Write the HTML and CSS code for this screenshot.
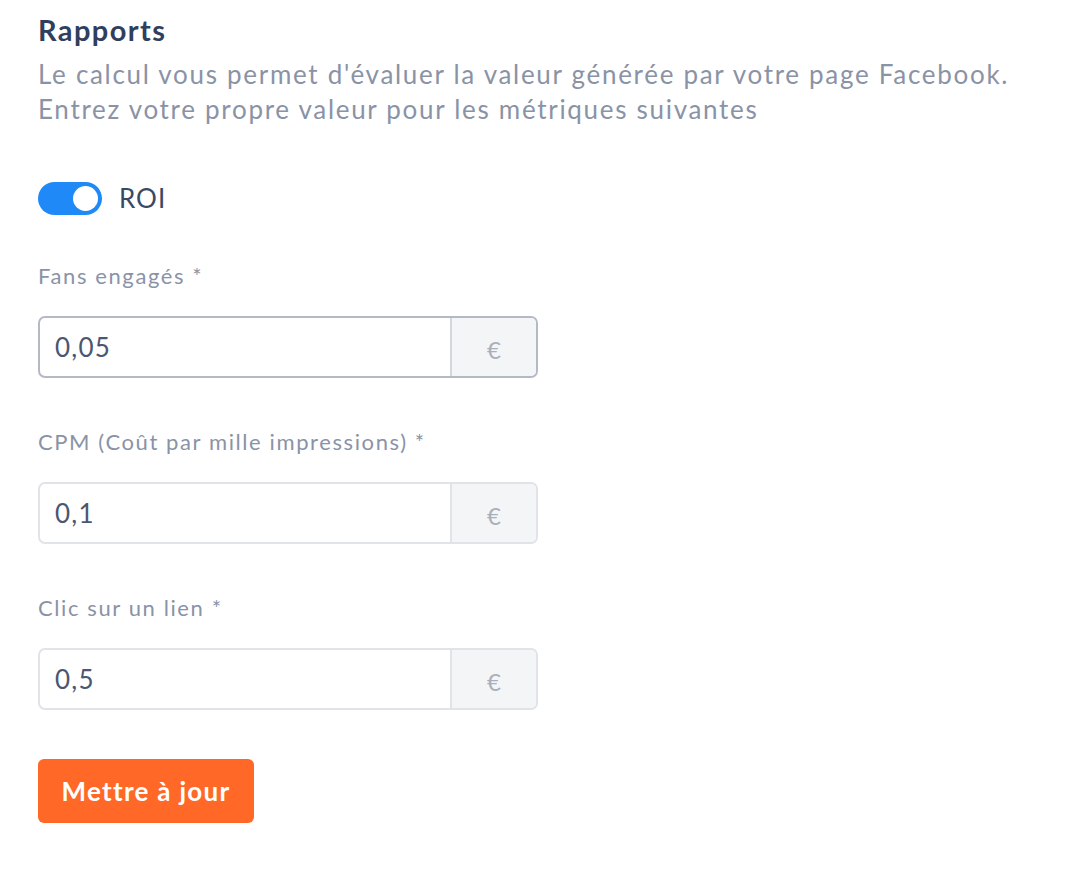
FILE: index.html
```html
<!DOCTYPE html>
<html lang="fr">
<head>
<meta charset="utf-8">
<title>Rapports</title>
<link rel="stylesheet" href="styles.css">
</head>
<body>
<main class="page">
  <h1 class="title">Rapports</h1>
  <p class="desc">Le calcul vous permet d'évaluer la valeur générée par votre page Facebook.<br>Entrez votre propre valeur pour les métriques suivantes</p>

  <div class="toggle-row">
    <span class="toggle"><span class="knob"></span></span>
    <span class="toggle-label">ROI</span>
  </div>

  <div class="field">
    <label class="label">Fans engagés *</label>
    <div class="input-group focused">
      <span class="input-value">0,05</span>
      <span class="addon">€</span>
    </div>
  </div>

  <div class="field">
    <label class="label">CPM (Coût par mille impressions) *</label>
    <div class="input-group">
      <span class="input-value">0,1</span>
      <span class="addon">€</span>
    </div>
  </div>

  <div class="field">
    <label class="label">Clic sur un lien *</label>
    <div class="input-group">
      <span class="input-value">0,5</span>
      <span class="addon">€</span>
    </div>
  </div>

  <button class="btn">Mettre à jour</button>
</main>
</body>
</html>
```

FILE: styles.css
```css
html, body {
  margin: 0;
  padding: 0;
  background: #ffffff;
}
body {
  font-family: "Lato", "Noto Sans", sans-serif;
  color: #33415c;
}
.page {
  padding: 12px 0 0 38px;
  display: flex;
  flex-direction: column;
  align-items: flex-start;
}
.title {
  margin: 0;
  font-size: 29px;
  line-height: 36px;
  font-weight: 700;
  color: #2f3f5d;
  letter-spacing: 1.4px;
}
.desc {
  margin: 9px 0 0 0;
  font-size: 26px;
  line-height: 35px;
  color: #8a93a6;
  letter-spacing: 1.7px;
}
.toggle-row {
  margin-top: 55px;
  display: flex;
  align-items: center;
  gap: 17px;
}
.toggle {
  width: 64px;
  height: 33px;
  border-radius: 17px;
  background: #1f8af7;
  display: flex;
  align-items: center;
  justify-content: flex-end;
  padding: 0 4px;
  box-sizing: border-box;
  flex-shrink: 0;
}
.knob {
  width: 25px;
  height: 25px;
  border-radius: 50%;
  background: #ffffff;
}
.toggle-label {
  font-size: 26px;
  line-height: 33px;
  color: #3a4866;
  letter-spacing: 1px;
}
.field {
  display: flex;
  flex-direction: column;
  margin-top: 49px;
}
.field + .field {
  margin-top: 52px;
}
.label {
  font-size: 22px;
  line-height: 24px;
  color: #8a93a6;
  letter-spacing: 1.6px;
}
.input-group {
  margin-top: 28px;
  width: 500px;
  height: 62px;
  flex-shrink: 0;
  box-sizing: border-box;
  border: 2px solid #e0e3e8;
  border-radius: 7px;
  display: flex;
  align-items: stretch;
  overflow: hidden;
}
.input-group.focused {
  border-color: #b4b9c4;
}
.input-value {
  flex: 1;
  display: flex;
  align-items: center;
  padding-left: 15px;
  font-size: 26px;
  color: #4b5671;
  letter-spacing: 1.2px;
}
.addon {
  width: 86px;
  background: #f4f5f7;
  border-left: 2px solid #e0e3e8;
  display: flex;
  align-items: center;
  justify-content: center;
  font-size: 24px;
  color: #a9afbb;
  padding-top: 4px;
  box-sizing: border-box;
}
.input-group.focused .addon {
  border-left-color: #d2d6dd;
}
.btn {
  margin-top: 49px;
  width: 216px;
  height: 64px;
  flex-shrink: 0;
  border: none;
  border-radius: 6px;
  background: #ff6826;
  color: #ffffff;
  font-family: "Lato", "Noto Sans", sans-serif;
  font-size: 26px;
  font-weight: 700;
  letter-spacing: 1.3px;
  padding: 0;
}
```
